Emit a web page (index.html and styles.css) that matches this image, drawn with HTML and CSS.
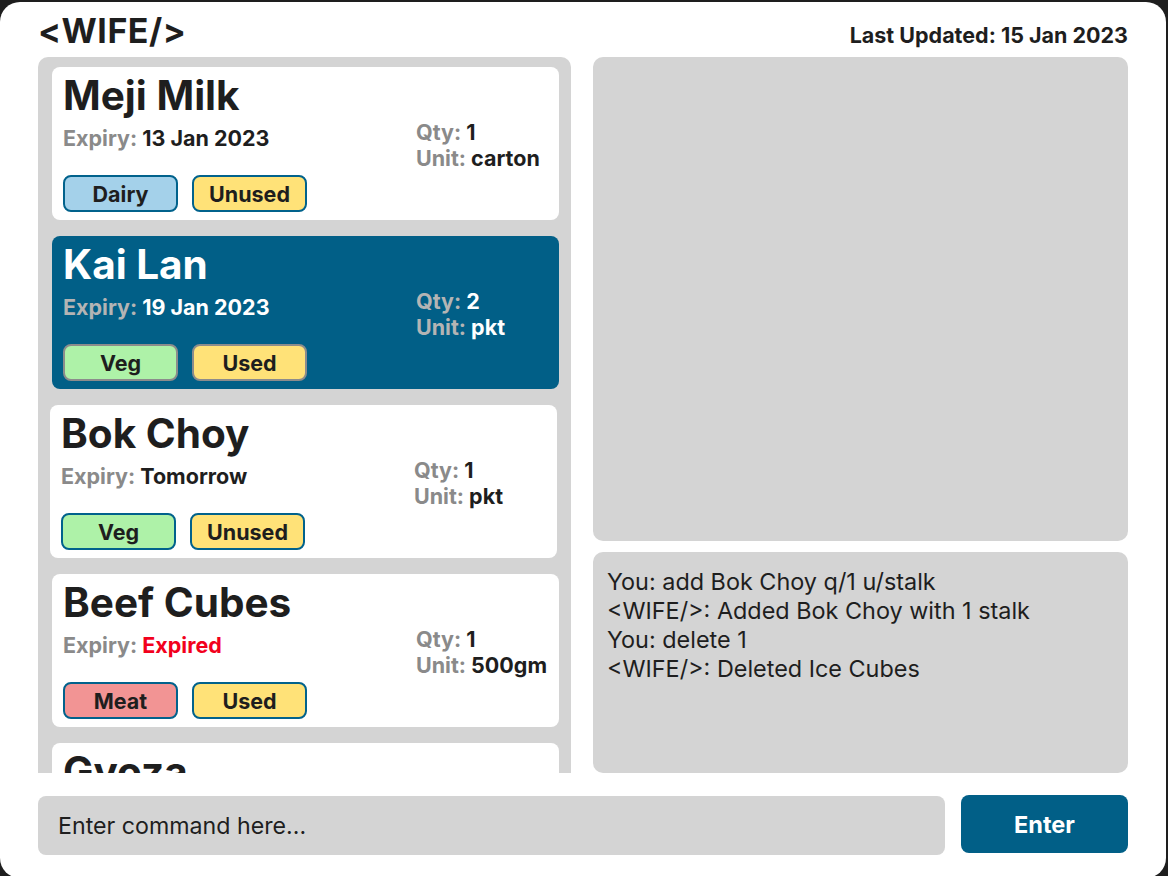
FILE: index.html
```html
<!DOCTYPE html>
<html lang="en">
<head>
<meta charset="utf-8">
<title>&lt;WIFE/&gt;</title>
<link rel="stylesheet" href="styles.css">
</head>
<body>
<div class="app">
  <header class="header">
    <h1 class="logo">&lt;WIFE/&gt;</h1>
    <div class="updated">Last Updated: 15 Jan 2023</div>
  </header>
  <main class="main">
    <section class="list">
      <article class="card">
        <div class="card-left">
          <h2 class="name">Meji Milk</h2>
          <div class="expiry"><span class="lbl">Expiry:</span> 13 Jan 2023</div>
          <div class="tags"><span class="tag dairy">Dairy</span><span class="tag status">Unused</span></div>
        </div>
        <div class="card-right">
          <div class="row"><span class="lbl">Qty:</span> 1</div>
          <div class="row"><span class="lbl">Unit:</span> carton</div>
        </div>
      </article>
      <article class="card selected">
        <div class="card-left">
          <h2 class="name">Kai Lan</h2>
          <div class="expiry"><span class="lbl">Expiry:</span> 19 Jan 2023</div>
          <div class="tags"><span class="tag veg">Veg</span><span class="tag status">Used</span></div>
        </div>
        <div class="card-right">
          <div class="row"><span class="lbl">Qty:</span> 2</div>
          <div class="row"><span class="lbl">Unit:</span> pkt</div>
        </div>
      </article>
      <article class="card nudged">
        <div class="card-left">
          <h2 class="name">Bok Choy</h2>
          <div class="expiry"><span class="lbl">Expiry:</span> Tomorrow</div>
          <div class="tags"><span class="tag veg">Veg</span><span class="tag status">Unused</span></div>
        </div>
        <div class="card-right">
          <div class="row"><span class="lbl">Qty:</span> 1</div>
          <div class="row"><span class="lbl">Unit:</span> pkt</div>
        </div>
      </article>
      <article class="card">
        <div class="card-left">
          <h2 class="name">Beef Cubes</h2>
          <div class="expiry"><span class="lbl">Expiry:</span> <span class="expired">Expired</span></div>
          <div class="tags"><span class="tag meat">Meat</span><span class="tag status">Used</span></div>
        </div>
        <div class="card-right">
          <div class="row"><span class="lbl">Qty:</span> 1</div>
          <div class="row"><span class="lbl">Unit:</span> 500gm</div>
        </div>
      </article>
      <article class="card">
        <div class="card-left">
          <h2 class="name">Gyoza</h2>
          <div class="expiry"><span class="lbl">Expiry:</span> 20 Jan 2023</div>
          <div class="tags"><span class="tag meat">Meat</span><span class="tag status">Unused</span></div>
        </div>
        <div class="card-right">
          <div class="row"><span class="lbl">Qty:</span> 1</div>
          <div class="row"><span class="lbl">Unit:</span> pkt</div>
        </div>
      </article>
    </section>
    <section class="side">
      <div class="preview"></div>
      <div class="log">
        <p>You: add Bok Choy q/1 u/stalk</p>
        <p>&lt;WIFE/&gt;: Added Bok Choy with 1 stalk</p>
        <p>You: delete 1</p>
        <p>&lt;WIFE/&gt;: Deleted Ice Cubes</p>
      </div>
    </section>
  </main>
  <footer class="command">
    <input class="input" type="text" placeholder="Enter command here...">
    <button class="enter" type="button">Enter</button>
  </footer>
</div>
</body>
</html>
```

FILE: styles.css
```css
* { box-sizing: border-box; }

html, body {
  margin: 0;
  padding: 0;
  background: #1e1e1e;
  height: 876px;
  overflow: hidden;
}

body {
  font-family: Inter, "Noto Sans", "Liberation Sans", sans-serif;
  color: #1e1e1e;
  padding-top: 2px;
}

.app {
  width: 1166px;
  height: 876px;
  background: #ffffff;
  border-radius: 20px;
  padding: 11px 38px 0 38px;
  display: flex;
  flex-direction: column;
}

.header {
  display: flex;
  justify-content: space-between;
  align-items: baseline;
  height: 44px;
}

.logo {
  margin: 0;
  font-size: 34px;
  line-height: 36px;
  font-weight: 700;
  letter-spacing: 0.5px;
}

.updated {
  font-size: 21.5px;
  font-weight: 700;
  line-height: 24px;
}

.main {
  display: flex;
  gap: 22px;
  height: 716px;
}

.list {
  width: 533px;
  flex: none;
  background: #d4d4d4;
  border-radius: 10px 10px 0 0;
  padding: 10px 12px 0 14px;
  display: flex;
  flex-direction: column;
  gap: 16px;
  overflow: hidden;
}

.card {
  flex: none;
  height: 153px;
  background: #ffffff;
  border-radius: 8px;
  padding: 8px 11px 8px 11px;
  display: flex;
}

.card.nudged {
  margin-left: -2px;
  margin-right: 2px;
}

.card-left {
  width: 353px;
  flex: none;
  display: flex;
  flex-direction: column;
}

.name {
  margin: 0;
  font-size: 40.5px;
  line-height: 41px;
  font-weight: 700;
}

.expiry {
  margin-top: 10px;
  font-size: 21.5px;
  line-height: 24px;
  font-weight: 700;
}

.lbl { color: #8a8a8a; }

.expired { color: #f2001c; }

.tags {
  margin-top: 25px;
  display: flex;
  gap: 14px;
}

.tag {
  width: 115px;
  height: 37px;
  border: 2px solid #01628c;
  border-radius: 8px;
  display: flex;
  align-items: center;
  justify-content: center;
  font-size: 21.5px;
  font-weight: 700;
  color: #1e1e1e;
}

.tag.dairy { background: #a4d1ea; }
.tag.veg { background: #aef2a8; }
.tag.meat { background: #f29494; }
.tag.status { background: #ffe278; }

.card-right {
  padding-top: 44px;
  font-size: 21.5px;
  line-height: 26px;
  font-weight: 700;
}

.card.selected {
  background: #015f87;
  color: #ffffff;
}

.card.selected .lbl { color: #b4b4b4; }
.card.selected .tag { border-color: #8c8c8c; }

.side {
  flex: 1;
  display: flex;
  flex-direction: column;
  gap: 11px;
}

.preview {
  height: 484px;
  background: #d4d4d4;
  border-radius: 10px;
}

.log {
  flex: 1;
  background: #d4d4d4;
  border-radius: 10px;
  padding: 15px 14px;
  font-size: 23.4px;
  line-height: 29px;
  color: #1e1e1e;
}

.log p { margin: 0; }

.command {
  margin-top: 22px;
  display: flex;
  gap: 16px;
  align-items: flex-start;
}

.input {
  width: 907px;
  height: 59px;
  margin-top: 1px;
  border: none;
  outline: none;
  background: #d4d4d4;
  border-radius: 8px;
  padding: 0 20px;
  font-family: inherit;
  font-size: 23.2px;
  line-height: 30px;
  color: #1e1e1e;
}

.input::placeholder { color: #1e1e1e; opacity: 1; }

.enter {
  width: 167px;
  height: 58px;
  border: none;
  background: #015f87;
  color: #ffffff;
  border-radius: 8px;
  font-family: inherit;
  font-size: 23.5px;
  font-weight: 700;
  cursor: pointer;
}
```
